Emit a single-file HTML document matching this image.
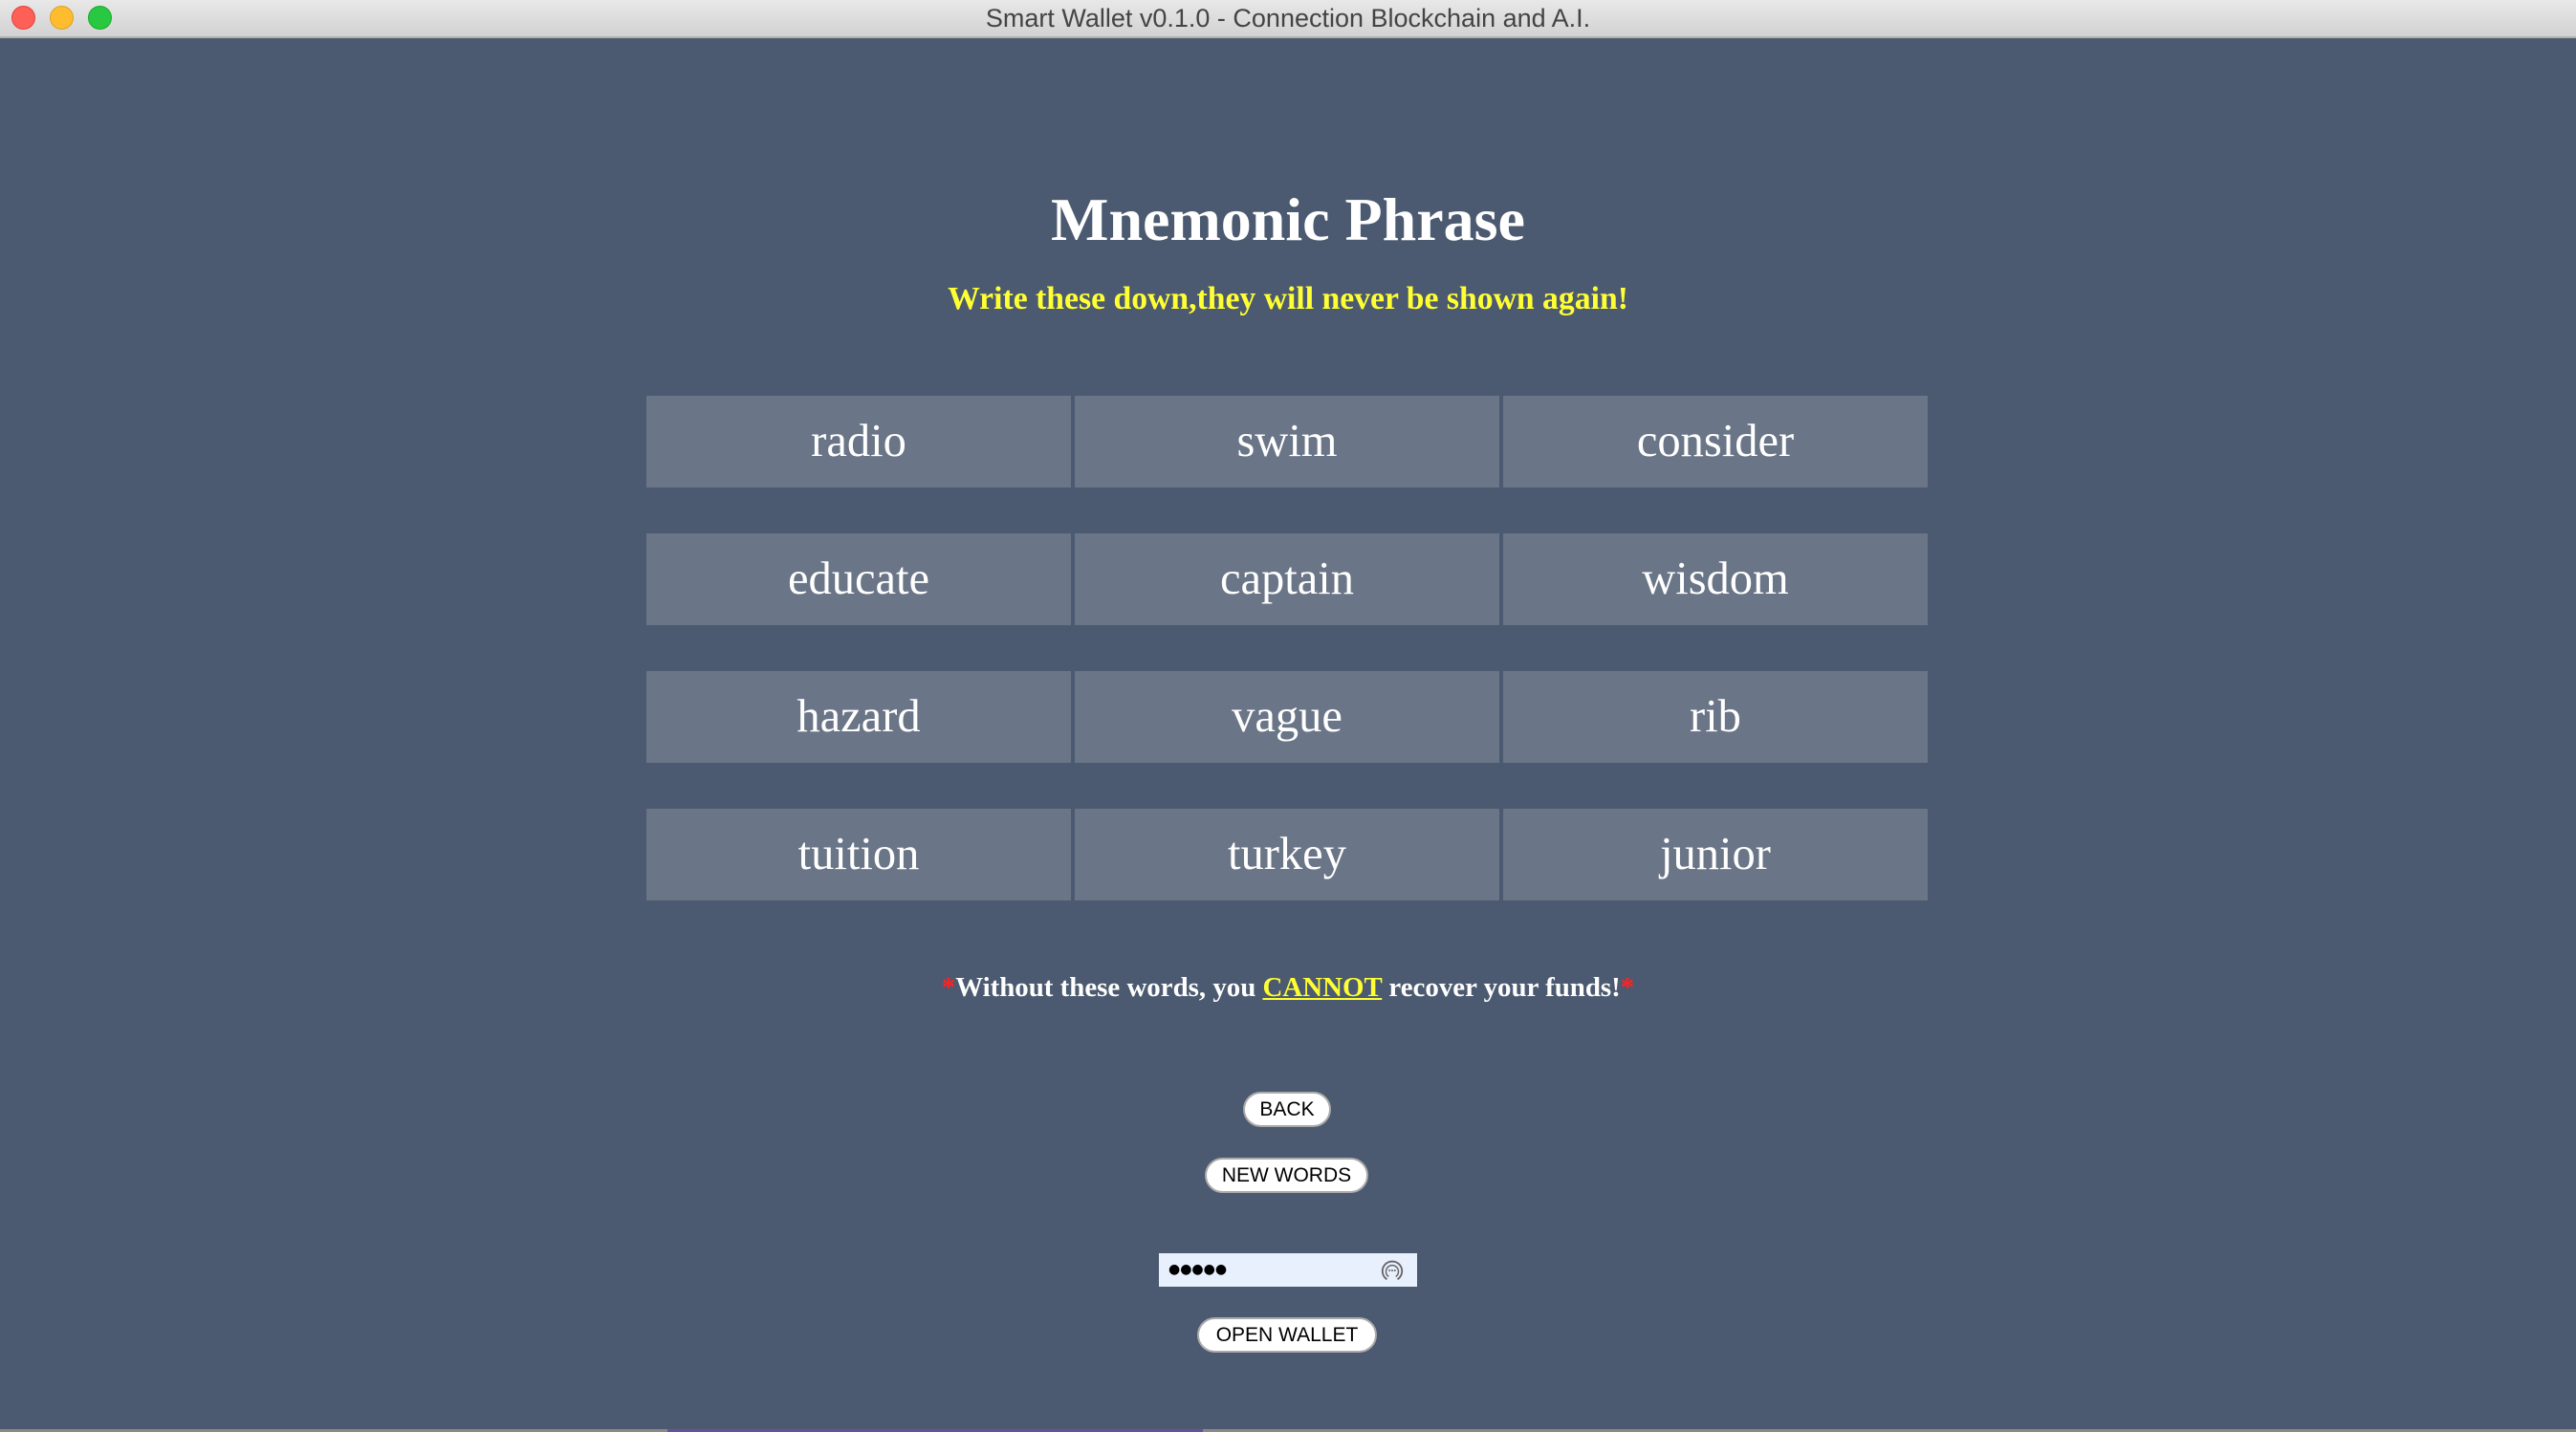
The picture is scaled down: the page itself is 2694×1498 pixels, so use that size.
<!DOCTYPE html>
<html><head><meta charset="utf-8"><style>
html,body{margin:0;padding:0;width:2694px;height:1498px;overflow:hidden;background:#4b5a70;position:relative}
.bar{position:absolute;left:0;top:0;width:2694px;height:38px;background:linear-gradient(#e8e8e8,#d2d2d2);border-bottom:2px solid #b0b0b0}
.dot{position:absolute;top:6px;width:23px;height:23px;border-radius:50%}
.bar .t{position:absolute;left:0;right:0;top:4px;text-align:center;font:27px "Liberation Sans",sans-serif;color:#444}
.c{position:absolute;left:0;width:2694px;text-align:center;font-family:"Liberation Serif",serif;font-weight:bold}
.cell{position:absolute;width:444px;height:96px;background:#6a7587;color:#fff;font:48.5px/96px "Liberation Serif",serif;text-align:center}
.btn{position:absolute;height:33px;border:2px solid #aaa;border-radius:19px;background:#fff;font:21px/33px "Liberation Sans",sans-serif;color:#000;text-align:center;box-sizing:content-box}
</style></head><body>
<div class="bar">
<div class="dot" style="left:12px;background:#fe5f57;border:1px solid #e0443e"></div>
<div class="dot" style="left:52px;background:#febc2e;border:1px solid #dea123"></div>
<div class="dot" style="left:92px;background:#28c840;border:1px solid #1aab29"></div>
<div class="t">Smart Wallet v0.1.0 - Connection Blockchain and A.I.</div>
</div>
<div class="c" style="top:193px;font-size:64px;color:#fff">Mnemonic Phrase</div>
<div class="c" style="top:294px;font-size:33.7px;color:#ffff33">Write these down,they will never be shown again!</div>

<div class="cell" style="left:676px;top:414px">radio</div>
<div class="cell" style="left:1124px;top:414px">swim</div>
<div class="cell" style="left:1572px;top:414px">consider</div>
<div class="cell" style="left:676px;top:558px">educate</div>
<div class="cell" style="left:1124px;top:558px">captain</div>
<div class="cell" style="left:1572px;top:558px">wisdom</div>
<div class="cell" style="left:676px;top:702px">hazard</div>
<div class="cell" style="left:1124px;top:702px">vague</div>
<div class="cell" style="left:1572px;top:702px">rib</div>
<div class="cell" style="left:676px;top:846px">tuition</div>
<div class="cell" style="left:1124px;top:846px">turkey</div>
<div class="cell" style="left:1572px;top:846px">junior</div>

<div class="c" style="top:1017px;font-size:28.9px;color:#fff"><span style="color:#f22">*</span>Without these words, you <u style="color:#ffff33">CANNOT</u> recover your funds!<span style="color:#f22">*</span></div>

<div class="btn" style="left:1300px;top:1142px;width:88px">BACK</div>
<div class="btn" style="left:1260px;top:1211px;width:167px">NEW WORDS</div>
<div style="position:absolute;left:1212px;top:1311px;width:270px;height:35px;background:#e8f0fe">
<div style="position:absolute;left:10px;top:0;font:bold 14px/35px 'DejaVu Sans',sans-serif;letter-spacing:0px;color:#000">●●●●●</div>
<svg style="position:absolute;left:231px;top:5px" width="26" height="26" viewBox="0 0 28 28"><path d="M8 24A11 11 0 1 1 20 24" fill="none" stroke="#666" stroke-width="2"/><path d="M10 21A7 7 0 1 1 18 21" fill="none" stroke="#666" stroke-width="1.6"/><circle cx="11" cy="14" r="1.1" fill="#666"/><circle cx="14" cy="14" r="1.1" fill="#666"/><circle cx="17" cy="14" r="1.1" fill="#666"/></svg>
</div>
<div class="btn" style="left:1252px;top:1378px;width:184px">OPEN WALLET</div>
<div style="position:absolute;left:0;top:1495px;width:2694px;height:3px;background:#8a8a80"></div>
<div style="position:absolute;left:698px;top:1495px;width:560px;height:3px;background:#6a4fa0"></div>
</body></html>
